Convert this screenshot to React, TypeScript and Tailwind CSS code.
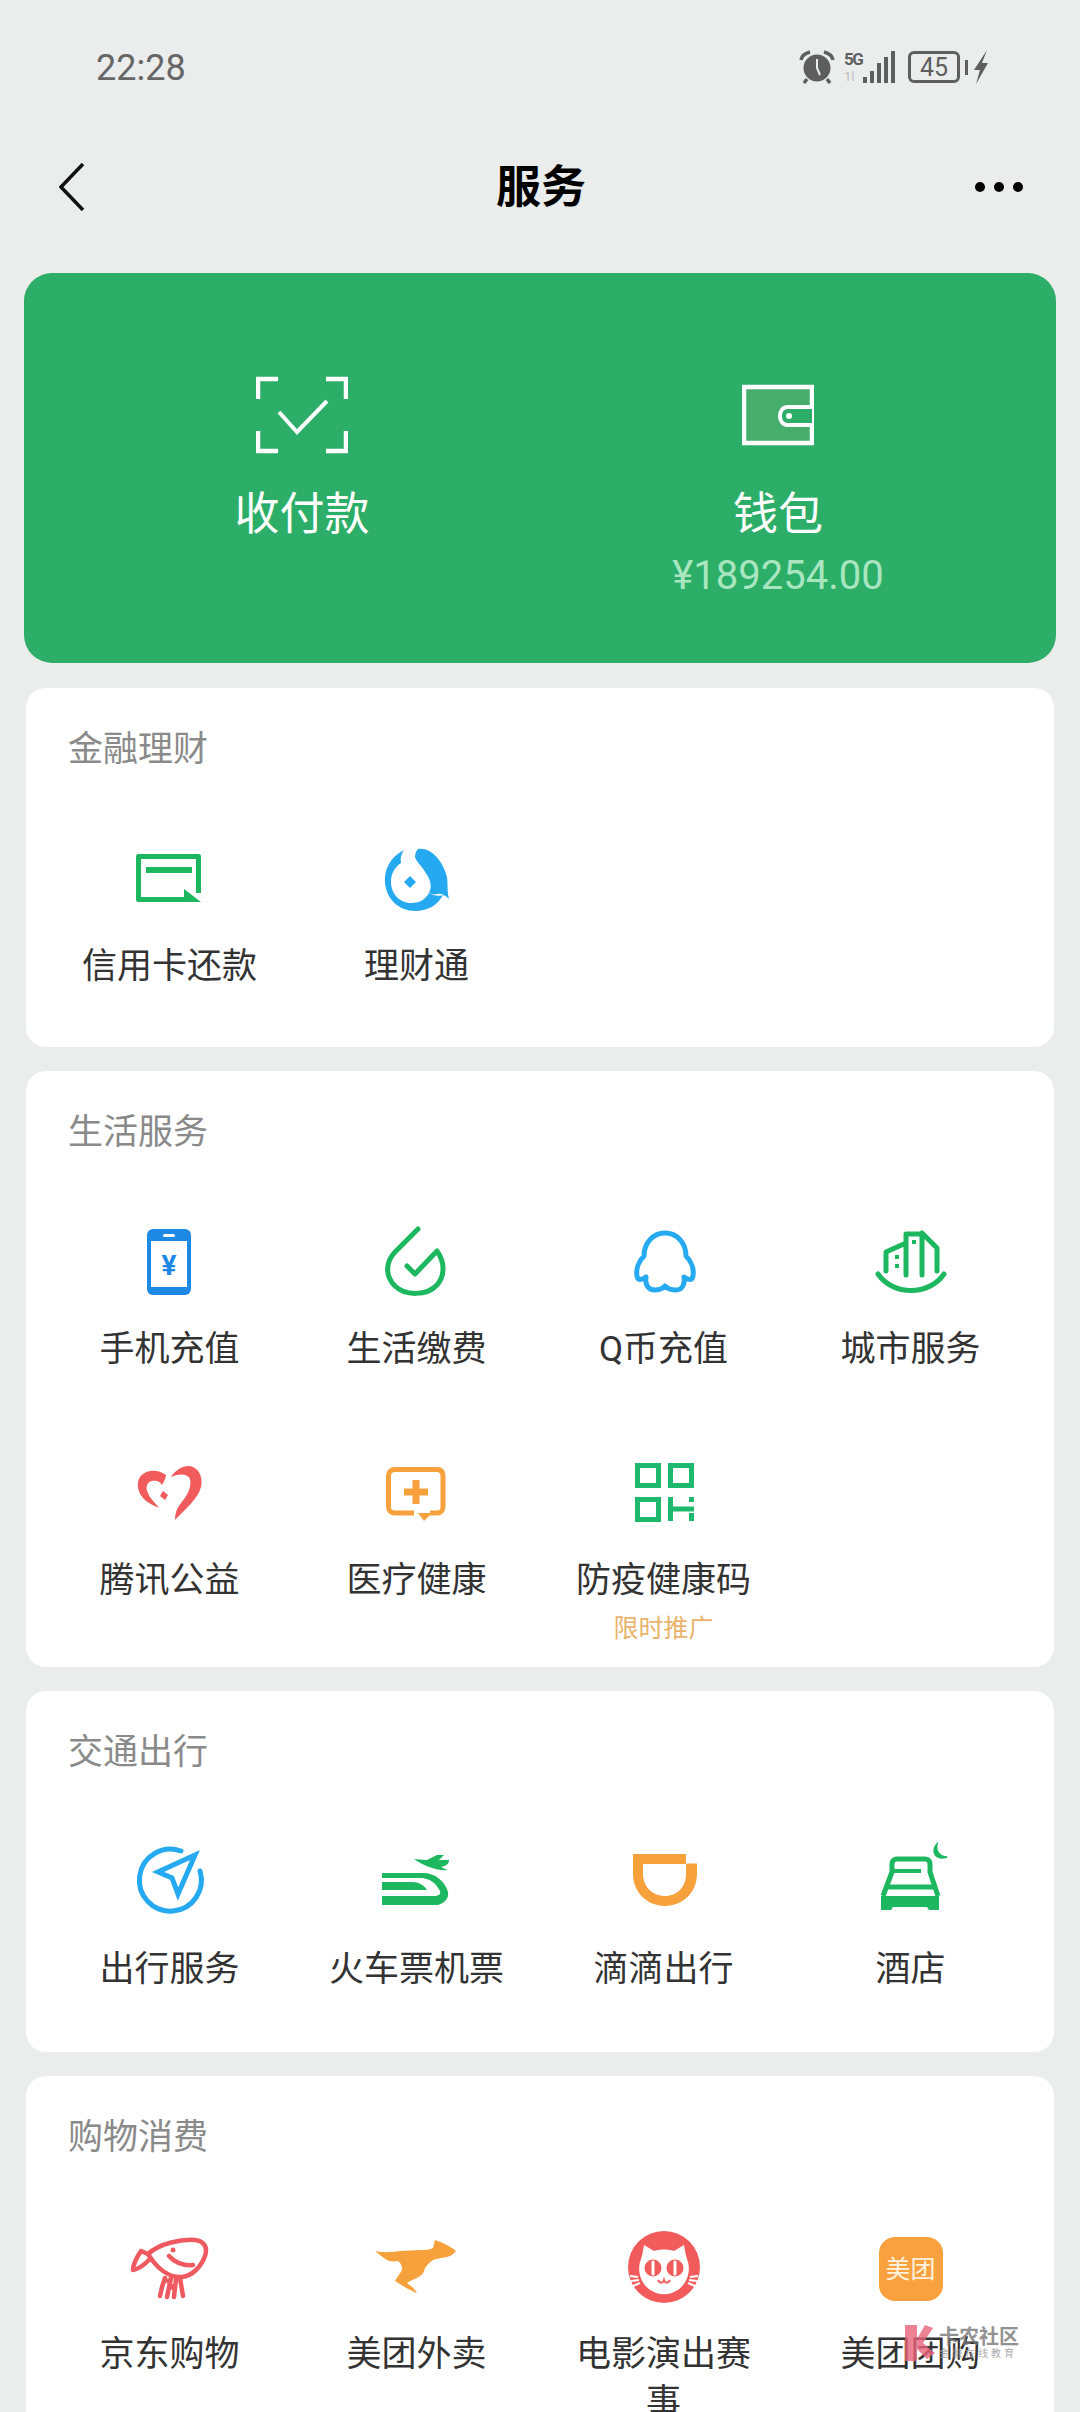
import type { ReactNode } from "react";

const GREEN = "#1cb75e";
const BLUE = "#25a9f0";
const ORANGE = "#f7a13c";
const RED = "#f15b5b";

const Icon = ({ children }: { children: ReactNode }) => (
  <svg width="80" height="80" viewBox="0 0 80 80" fill="none" className="overflow-visible">
    {children}
  </svg>
);

const CardIcon = () => (
  <Icon>
    <path d="M68.5 56V19.5H8.5V62.5H55" stroke={GREEN} strokeWidth="5" strokeLinejoin="round" />
    <path d="M16 30H62V36H16Z" fill={GREEN} />
    <path d="M54 52L71 65H54Z" fill={GREEN} />
  </Icon>
);

const LicaiIcon = () => (
  <Icon>
    <path d="M27 13C13 20 7 33 8 45C9 62 22 74 38 74C50 74 60 69 66 58C60 60 56 58 52 56C48 63 42 66 34 66C22 66 14 56 14 45C14 36 18 30 24 26C23 22 24 17 27 13Z" fill={BLUE} />
    <path d="M41 12C54 10 66 24 70 40C71 48 70 55 72 62C68 58 64 56 60 57C57 58 55 57 52 56C55 50 54 44 50 38C46 30 40 26 38 20C38 17 39 14 41 12Z" fill={BLUE} />
    <path d="M33 39L39 45L33 51L27 45Z" fill={BLUE} />
  </Icon>
);

const PhoneIcon = () => (
  <Icon>
    <rect x="17" y="9" width="44" height="66" rx="6" fill="#1e88e5" />
    <rect x="21" y="21" width="36" height="46" fill="#fff" />
    <rect x="33" y="14" width="12" height="3" rx="1.5" fill="#fff" />
    <text x="39" y="55" textAnchor="middle" fontSize="28" fontWeight="700" fontFamily="Roboto, sans-serif" fill="#1e88e5">
      ¥
    </text>
  </Icon>
);

const BillIcon = () => (
  <Icon>
    <path d="M41 9L19 31C8 42 8 56 18 66C28 76 50 76 60 65C68 56 68 42 60 31L38 54L30 46" stroke={GREEN} strokeWidth="5" strokeLinecap="round" strokeLinejoin="round" />
  </Icon>
);

const QQIcon = () => (
  <Icon>
    <path d="M41 13C29 13 20 23 20 36C14 42 12 50 13 56C14 61 18 60 22 57C21 63 23 70 31 70C36 70 39 68 41 66C43 68 47 70 52 70C59 70 61 63 60 57C64 60 68 61 69 56C70 50 68 42 62 36C62 23 53 13 41 13Z" stroke={BLUE} strokeWidth="5" strokeLinejoin="round" />
  </Icon>
);

const CityIcon = () => (
  <Icon>
    <path d="M15 51V32L35 23M35 55V14H51V55M51 13L66 28V51" stroke={GREEN} strokeWidth="5" strokeLinecap="round" strokeLinejoin="round" />
    <path d="M7 54C22 76 58 76 73 54" stroke={GREEN} strokeWidth="5" strokeLinecap="round" />
    <path d="M24 35H28V39H24ZM24 44H28V48H24ZM41 20H45V24H41Z" fill={GREEN} />
  </Icon>
);

const HeartIcon = () => (
  <Icon>
    <path d="M41 26C46 18 56 13 63 16C70 19 73 28 71 36C68 48 55 58 45 69C45 62 47 57 51 52C57 45 62 36 60 28C58 23 50 22 41 26Z" fill={RED} />
    <path d="M36 24C28 18 16 18 10 26C5 34 9 44 16 50C20 53 25 55 29 57C26 52 20 48 18 42C15 36 17 31 22 30C26 29 30 30 32 34C34 30 36 27 36 24Z" fill={RED} />
    <path d="M33 40L38 44L35 49L30 45Z" fill={RED} />
  </Icon>
);

const MedicalIcon = () => (
  <Icon>
    <path d="M37 62H18C14 62 11.500 59 11.500 56V25C11.500 21 14 18.500 18 18.500H60C64 18.500 66 21 66 25V56C66 59 64 62 60 62H53" stroke={ORANGE} strokeWidth="5" />
    <path d="M41 62H55L47 70Z" fill={ORANGE} />
    <path d="M27 37.500H35.500V29H42.500V37.500H51V44.500H42.500V53H35.500V44.500H27Z" fill={ORANGE} />
  </Icon>
);

const QRIcon = () => (
  <Icon>
    <g stroke="#1dba6e" strokeWidth="5">
      <rect x="13.500" y="14.500" width="21" height="20" />
      <rect x="46.500" y="14.500" width="21" height="20" />
      <rect x="13.500" y="48.500" width="21" height="20" />
      <path d="M46.500 46V70M46 58H70M67.500 46V51M67.500 62V70" />
    </g>
  </Icon>
);

const TravelIcon = () => (
  <Icon>
    <path d="M51 11A31 31 0 1 0 70 31" stroke={BLUE} strokeWidth="5" strokeLinecap="round" />
    <path d="M65 15L28 32L42 38L48 54Z" stroke={BLUE} strokeWidth="5" strokeLinejoin="miter" />
  </Icon>
);

const TrainIcon = () => (
  <Icon>
    <path d="M5 33H46C58 33 68 41 71 52C72 58 68 63 61 65H5V56H56C62 56 64 54 63 51C59 43 52 38 44 38H5Z" fill={GREEN} />
    <path d="M5 42H35C42 42 47 45 50 50H5Z" fill={GREEN} />
    <path d="M37 19C48 20 58 21 64 20L72 20C72 24 69 26 64 27C66 28 68 29 71 30C62 31 48 27 37 19Z" fill={GREEN} />
    <path d="M48 21L60 15H67L59 23Z" fill={GREEN} />
  </Icon>
);

const DidiIcon = () => (
  <Icon>
    <path d="M9 14H62V24H19V34C19 47 29 56 41 56C53 56 62 47 62 34V24H63V23.500H73V34C73 52 59 66 41 66C23 66 9 52 9 34Z" fill={ORANGE} />
  </Icon>
);

const HotelIcon = () => (
  <Icon>
    <path d="M12 56L21 32V24C21 21 23 19 26 19H54C57 19 59 21 59 24V32L67 56" stroke={GREEN} strokeWidth="5" />
    <path d="M22 31H50" stroke={GREEN} strokeWidth="4" />
    <path d="M16 47H64" stroke={GREEN} strokeWidth="5" />
    <path d="M10 56H68V70H58L56 67H22L20 70H10Z" fill={GREEN} />
    <path d="M66 4C60 10 63 21 76 17C70 17 64 12 66 4Z" fill={GREEN} stroke={GREEN} strokeWidth="1.500" />
  </Icon>
);

const JdIcon = () => (
  <Icon>
    <g stroke="#ee5a5f" strokeWidth="4.500" strokeLinecap="round" strokeLinejoin="round">
      <path d="M18 25C30 14 52 10 65 11C74 12 78 18 75 27C71 38 62 47 52 48C38 49 26 38 18 25Z" />
      <path d="M18 25L11 22C7 28 3 36 3 41C8 40 14 36 19 31" />
      <path d="M39 27C44 33 53 37 63 36" />
      <path d="M35 49L32 58L30 67M41 49L37 68M44 60L38 52M50 49L53 67M46 50L44 68" />
    </g>
    <circle cx="43" cy="21" r="2.500" fill="#ee5a5f" />
  </Icon>
);

const KangarooIcon = () => (
  <Icon>
    <path d="M-2 22C8 24 15 23 23 22C30 22 37 21 43 21C48 21 52 21 56 19L58 11L66 14C71 17 76 19 79 22C76 26 73 27 70 28C64 29 59 30 56 31C52 34 50 36 48 39C47 43 46 45 43 47C39 50 34 51 30 54C34 57 38 60 40 64C33 62 25 56 18 52C20 48 23 45 25 41C25 37 24 34 21 32C15 33 12 32 10 31C5 28 2 25 -2 22Z" fill={ORANGE} />
  </Icon>
);

const CatIcon = () => (
  <Icon>
    <circle cx="40" cy="38" r="36" fill={RED} />
    <path d="M20 16L30 22C36 20 44 20 50 22L60 16C61 22 62 28 64 33C67 44 62 58 50 63C44 66 36 66 30 63C18 58 13 44 16 33C18 28 19 22 20 16Z" fill="#fff" />
    <circle cx="29" cy="39" r="8.500" fill={RED} />
    <circle cx="51" cy="39" r="8.500" fill={RED} />
    <path d="M29 33V45M51 33V45" stroke="#fff" strokeWidth="3" strokeLinecap="round" />
    <path d="M34 51C36 55 39 54 40 51C41 54 44 55 46 51" stroke={RED} strokeWidth="2" />
    <path d="M6 47L14 48M7 52L15 51M9 57L16 54M74 47L66 48M73 52L65 51M71 57L64 54" stroke="#fff" strokeWidth="2" />
  </Icon>
);

const MeituanIcon = () => (
  <div className="flex h-20 w-20 items-center justify-center">
    <div className="flex h-16 w-16 items-center justify-center rounded-2xl bg-[#f9a13e] text-[25px] leading-none text-[#fff1dd]">
      美团
    </div>
  </div>
);

type Item = { name: string; icon: ReactNode; note?: string };

const sections: { title: string; pb: string; iconClass?: string; items: Item[] }[] = [
  {
    title: "金融理财",
    pb: "pb-[56px]",
    items: [
      { name: "信用卡还款", icon: <CardIcon /> },
      { name: "理财通", icon: <LicaiIcon /> },
    ],
  },
  {
    title: "生活服务",
    pb: "pb-5",
    items: [
      { name: "手机充值", icon: <PhoneIcon /> },
      { name: "生活缴费", icon: <BillIcon /> },
      { name: "Q币充值", icon: <QQIcon /> },
      { name: "城市服务", icon: <CityIcon /> },
      { name: "腾讯公益", icon: <HeartIcon /> },
      { name: "医疗健康", icon: <MedicalIcon /> },
      { name: "防疫健康码", icon: <QRIcon />, note: "限时推广" },
    ],
  },
  {
    title: "交通出行",
    pb: "pb-[58px]",
    items: [
      { name: "出行服务", icon: <TravelIcon /> },
      { name: "火车票机票", icon: <TrainIcon /> },
      { name: "滴滴出行", icon: <DidiIcon /> },
      { name: "酒店", icon: <HotelIcon /> },
    ],
  },
  {
    title: "购物消费",
    pb: "pb-[57px]",
    iconClass: "mt-1 -mb-1",
    items: [
      { name: "京东购物", icon: <JdIcon /> },
      { name: "美团外卖", icon: <KangarooIcon /> },
      { name: "电影演出赛事", icon: <CatIcon /> },
      { name: "美团团购", icon: <MeituanIcon /> },
    ],
  },
];

const StatusIcons = () => (
  <div className="flex items-center text-[#5e5e5e]">
    <svg width="36" height="34" viewBox="0 0 36 34" fill="none">
      <circle cx="18" cy="18" r="13.500" fill="#5e5e5e" />
      <path d="M18 9V18L21 25" stroke="#ebeded" strokeWidth="2" />
      <path d="M2 10C3 5 7 3 11 2M34 10C33 5 29 3 25 2M8 29L5 33M28 29L31 33" stroke="#5e5e5e" strokeWidth="3.500" />
    </svg>
    <div className="ml-[9px] flex h-[32px] w-[18px] flex-col justify-between font-['Roboto'] leading-none">
      <span className="text-[17px] font-bold tracking-[-1.500px]">5G</span>
      <span className="text-[13px] text-[#bdbdbd]">1l</span>
    </div>
    <div className="ml-px flex h-[32px] items-end gap-[3px]">
      <div className="h-[6px] w-[4px] bg-[#5e5e5e]" />
      <div className="h-[12px] w-[4px] bg-[#5e5e5e]" />
      <div className="h-[20px] w-[4px] bg-[#5e5e5e]" />
      <div className="h-[26px] w-[4px] bg-[#5e5e5e]" />
      <div className="h-[32px] w-[4px] bg-[#5e5e5e]" />
    </div>
    <div className="ml-[13px] flex h-[32px] w-[52px] items-center justify-center rounded-[6px] border-[3px] border-[#5e5e5e] font-['Roboto'] text-[25px] leading-none">
      45
    </div>
    <div className="ml-[5px] h-[15px] w-[3px] bg-[#5e5e5e]" />
    <svg width="14" height="34" viewBox="0 0 14 34" className="ml-[6px]">
      <path d="M13 0L0 20H6L2 34L14 13H8Z" fill="#5e5e5e" />
    </svg>
  </div>
);

const App = () => {
  return (
    <div className="relative h-[2412px] w-[1080px] overflow-hidden bg-[#ebeded] font-['Roboto','Noto_Sans_CJK_SC',sans-serif]">
      {/* status bar */}
      <div className="flex h-[134px] items-center justify-between pr-[92px] pl-[96px]">
        <span className="pt-0.5 text-[36px] text-[#666]">22:28</span>
        <StatusIcons />
      </div>

      {/* title bar */}
      <div className="flex h-[106px] items-center justify-between pr-[57px] pl-[59px]">
        <svg width="26" height="48" viewBox="0 0 26 48" fill="none">
          <path d="M24 1L2 24L24 47" stroke="#111" strokeWidth="3.500" />
        </svg>
        <span className="text-[45px] leading-none font-bold text-black">服务</span>
        <div className="flex w-[26px] justify-end gap-[9px]">
          <div className="h-[10px] w-[10px] shrink-0 rounded-full bg-black" />
          <div className="h-[10px] w-[10px] shrink-0 rounded-full bg-black" />
          <div className="h-[10px] w-[10px] shrink-0 rounded-full bg-black" />
        </div>
      </div>

      <div className="mt-[33px] flex flex-col gap-6 pr-6 pl-6">
        {/* pay / wallet */}
        <div className="mb-px grid h-[390px] grid-cols-2 rounded-[28px] bg-[#2cae68] px-10 pt-[102px] text-white">
          <div className="flex flex-col items-center">
            <svg width="92" height="80" viewBox="0 0 92 80" fill="none">
              <path d="M2 24V4H22M70 4H90V24M2 56V76H22M70 76H90V56" stroke="#fff" strokeWidth="4.500" />
              <path d="M23 37L41 57L71 26" stroke="#fff" strokeWidth="4" />
            </svg>
            <div className="mt-[30px] text-[45px] leading-[60px]">收付款</div>
          </div>
          <div className="flex flex-col items-center">
            <svg width="72" height="80" viewBox="0 0 72 80" fill="none">
              <rect x="2" y="12" width="68" height="56" fill="#46ad6d" stroke="#fff" strokeWidth="4.500" />
              <path d="M70 32H46C41 32 38 36 38 41C38 46 41 50 46 50H70" fill="#2cae68" stroke="#fff" strokeWidth="4" />
              <circle cx="47" cy="41" r="3" fill="#fff" />
            </svg>
            <div className="mt-[30px] text-[45px] leading-[60px]">钱包</div>
            <div className="mt-[9px] text-[40px] leading-[44px] text-[#a9e6c0]">¥189254.00</div>
          </div>
        </div>

        {/* service sections */}
        {sections.map((section) => (
          <div key={section.title} className={`mx-0.5 rounded-[20px] bg-white px-5 pt-[38px] ${section.pb}`}>
            <div className="pl-[22px] text-[35px] leading-[48px] text-[#8a8a8a]">{section.title}</div>
            <div className="grid grid-cols-4 gap-y-[14px]">
              {section.items.map((item) => (
                <div key={item.name} className="flex flex-col items-center pt-[63px]">
                  <div className={`h-20 w-20 ${section.iconClass ?? ""}`}>{item.icon}</div>
                  <div className="mt-[26px] max-w-[190px] text-center text-[35px] leading-[48px] text-[#333]">
                    {item.name}
                  </div>
                  {item.note && (
                    <div className="mt-1.5 text-[25px] leading-9 text-[#e9b36c]">{item.note}</div>
                  )}
                </div>
              ))}
            </div>
          </div>
        ))}
      </div>

      {/* watermark */}
      <div className="absolute top-[2325px] left-[905px] flex items-center gap-[4px] opacity-80">
        <svg width="30" height="36" viewBox="0 0 30 36">
          <path d="M0 0H12V14L20 0L28 3L18 18L30 28L22 34L12 24V36H0Z" fill="#e8637a" />
        </svg>
        <div className="flex flex-col">
          <span className="text-[20px] leading-[22px] font-bold text-[#777]">卡农社区</span>
          <span className="text-[10px] leading-3 tracking-[3px] text-[#999]">金融在线教育</span>
        </div>
      </div>
    </div>
  );
};

export default App;
